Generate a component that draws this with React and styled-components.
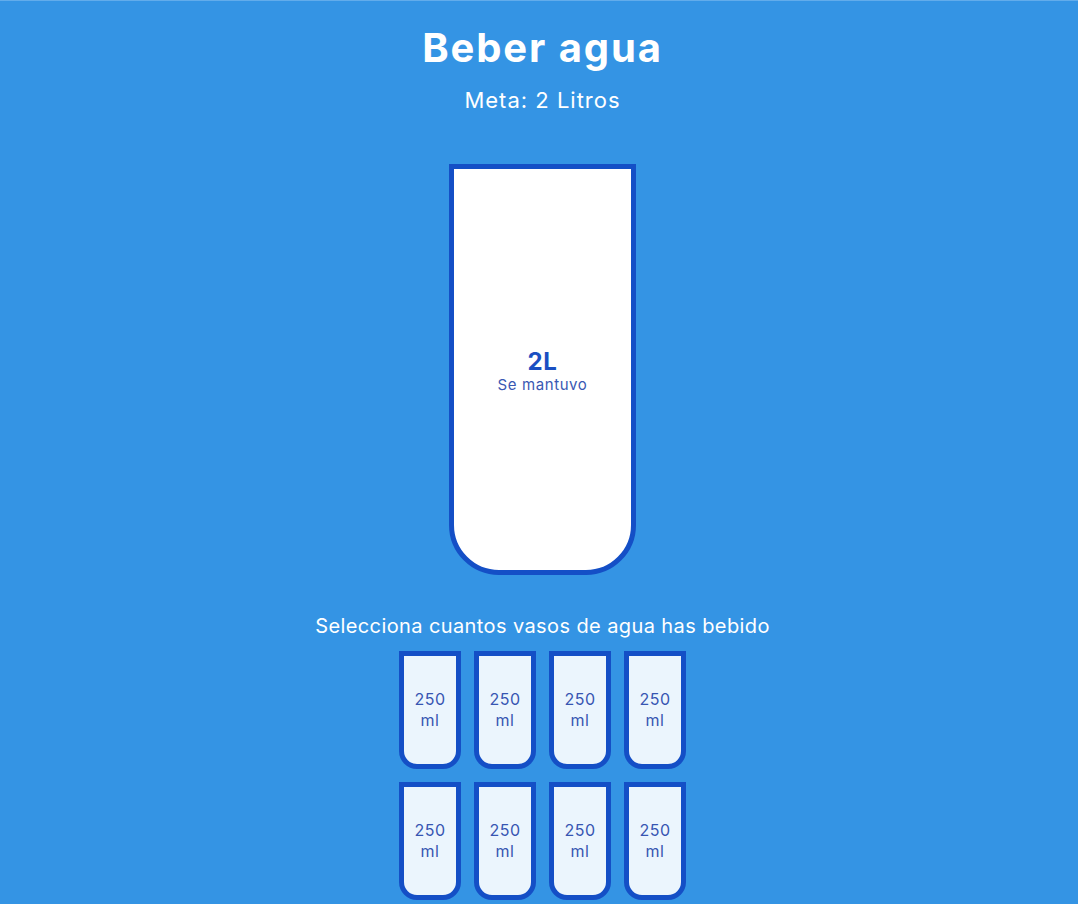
import React from "react";
import styled, { createGlobalStyle } from "styled-components";

const Global = createGlobalStyle`
  html, body { margin: 0; padding: 0; }
  body {
    background: #3494e4;
    color: #fff;
    font-family: "Inter", "Open Sans", sans-serif;
  }
`;

const Page = styled.main`
  box-sizing: border-box;
  min-height: 904px;
  border-top: 1px solid #62aceb;
  padding: 0 0 0 7px;
  display: flex;
  flex-direction: column;
  align-items: center;
`;

const Title = styled.h1`
  margin: 23px 0 0;
  font-size: 40px;
  line-height: 48px;
  font-weight: 700;
  letter-spacing: 1.9px;
`;

const Goal = styled.h3`
  margin: 14px 0 0;
  font-size: 22px;
  line-height: 28px;
  font-weight: 400;
  letter-spacing: 1px;
`;

const BigCup = styled.div`
  box-sizing: border-box;
  margin-top: 50px;
  width: 187px;
  height: 411px;
  background: #fff;
  border: 5px solid #144fc6;
  border-radius: 0 0 50px 50px;
  color: #144fc6;
  display: flex;
  flex-direction: column;
  overflow: hidden;
`;

const Remained = styled.div`
  flex: 1;
  display: flex;
  flex-direction: column;
  align-items: center;
  justify-content: center;
`;

const Liters = styled.span`
  font-size: 24px;
  line-height: 29px;
  font-weight: 700;
  letter-spacing: 0.6px;
  color: #1a4fc2;
`;

const Note = styled.small`
  font-size: 15px;
  line-height: 17px;
  letter-spacing: 0.6px;
  color: #3958b3;
`;

const Prompt = styled.p`
  margin: 39px 0 0;
  font-size: 20px;
  line-height: 24px;
  letter-spacing: 0.4px;
`;

const CupGrid = styled.div`
  margin-top: 13px;
  display: grid;
  grid-template-columns: repeat(4, 62px);
  column-gap: 13px;
  row-gap: 13px;
`;

const SmallCup = styled.div`
  box-sizing: border-box;
  width: 62px;
  height: 118px;
  background: rgba(255, 255, 255, 0.9);
  border: 5px solid #144fc6;
  border-radius: 0 0 18px 18px;
  color: #3756b2;
  font-size: 16px;
  line-height: 21px;
  letter-spacing: 0.5px;
  display: flex;
  align-items: center;
  justify-content: center;
  text-align: center;
  cursor: pointer;
`;

export default function App() {
  const cups = Array.from({ length: 8 });
  return (
    <>
      <Global />
      <Page>
        <Title>Beber agua</Title>
        <Goal>Meta: 2 Litros</Goal>
        <BigCup>
          <Remained>
            <Liters>2L</Liters>
            <Note>Se mantuvo</Note>
          </Remained>
        </BigCup>
        <Prompt>Selecciona cuantos vasos de agua has bebido</Prompt>
        <CupGrid>
          {cups.map((_, i) => (
            <SmallCup key={i}>
              250
              <br />
              ml
            </SmallCup>
          ))}
        </CupGrid>
      </Page>
    </>
  );
}
